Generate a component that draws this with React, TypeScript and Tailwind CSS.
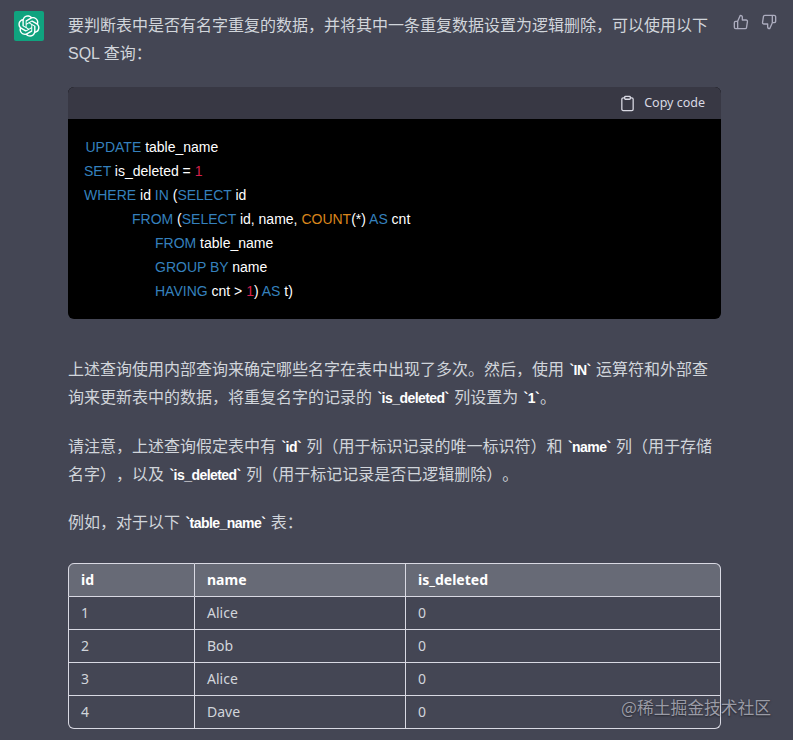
import React from "react";

const CJK = "font-['Liberation_Sans','Noto_Sans_CJK_SC',sans-serif]";

function Logo() {
  return (
    <div className="w-[30px] h-[30px] bg-[#10a37f] rounded-[2px] flex items-center justify-center shrink-0">
      <svg width="22" height="22" viewBox="0 0 41 41" fill="none">
        <path fill="#fff" d="M37.5324 16.8707C37.9808 15.5241 38.1363 14.0974 37.9886 12.6859C37.8409 11.2744 37.3934 9.91076 36.676 8.68622C35.6126 6.83404 33.9882 5.3676 32.0373 4.4985C30.0864 3.62941 27.9098 3.40259 25.8215 3.85078C24.8796 2.7893 23.7219 1.94125 22.4257 1.36341C21.1295 0.785575 19.7249 0.491269 18.3058 0.500197C16.1708 0.495044 14.0893 1.16803 12.3614 2.42214C10.6335 3.67624 9.34853 5.44666 8.6917 7.47815C7.30085 7.76286 5.98686 8.3414 4.8377 9.17505C3.68854 10.0087 2.73073 11.0782 2.02839 12.312C0.956464 14.1591 0.498905 16.2988 0.721698 18.4228C0.944492 20.5467 1.83612 22.5449 3.268 24.1293C2.81966 25.4759 2.66413 26.9026 2.81182 28.3141C2.95951 29.7256 3.40701 31.0892 4.12437 32.3138C5.18791 34.1659 6.8123 35.6322 8.76321 36.5013C10.7141 37.3704 12.8907 37.5973 14.9789 37.1492C15.9208 38.2107 17.0786 39.0587 18.3747 39.6366C19.6709 40.2144 21.0755 40.5087 22.4946 40.4998C24.6307 40.5054 26.7133 39.8321 28.4418 38.5772C30.1704 37.3223 31.4556 35.5506 32.1119 33.5179C33.5027 33.2332 34.8167 32.6547 35.9659 31.821C37.115 30.9874 38.0728 29.9178 38.7752 28.684C39.8458 26.8371 40.3023 24.6979 40.0789 22.5748C39.8556 20.4517 38.9639 18.4544 37.5324 16.8707ZM22.4978 37.8849C20.7443 37.8874 19.0459 37.2733 17.6994 36.1501C17.7601 36.117 17.8666 36.0586 17.936 36.0161L25.9004 31.4156C26.1003 31.3019 26.2663 31.137 26.3813 30.9378C26.4964 30.7386 26.5563 30.5124 26.5549 30.2825V19.0542L29.9213 20.998C29.9389 21.0068 29.9541 21.0198 29.9656 21.0359C29.977 21.052 29.9842 21.0707 29.9867 21.0902V30.3889C29.9842 32.375 29.1946 34.2791 27.7909 35.6841C26.3872 37.0892 24.4838 37.8806 22.4978 37.8849ZM6.39227 31.0064C5.51397 29.4888 5.19742 27.7107 5.49804 25.9832C5.55718 26.0187 5.66048 26.0818 5.73461 26.1244L13.699 30.7248C13.8975 30.8408 14.1233 30.902 14.3532 30.902C14.583 30.902 14.8088 30.8408 15.0073 30.7248L24.731 25.1103V28.9979C24.7321 29.0177 24.7283 29.0376 24.7199 29.0556C24.7115 29.0736 24.6988 29.0893 24.6829 29.1012L16.6317 33.7497C14.9096 34.7416 12.8643 35.0097 10.9447 34.4954C9.02506 33.9811 7.38785 32.7263 6.39227 31.0064ZM4.29707 13.6194C5.17156 12.0998 6.55279 10.9364 8.19885 10.3327C8.19885 10.4013 8.19491 10.5228 8.19491 10.6071V19.808C8.19351 20.0378 8.25334 20.2638 8.36823 20.4629C8.48312 20.6619 8.64893 20.8267 8.84863 20.9404L18.5723 26.5542L15.206 28.4979C15.1894 28.5089 15.1703 28.5155 15.1505 28.5173C15.1307 28.5191 15.1107 28.516 15.0924 28.5082L7.04046 23.8557C5.32135 22.8601 4.06716 21.2235 3.55289 19.3046C3.03862 17.3858 3.30624 15.3413 4.29707 13.6194ZM31.955 20.0556L22.2312 14.4411L25.5976 12.4981C25.6142 12.4872 25.6333 12.4805 25.6531 12.4787C25.6729 12.4769 25.6928 12.4801 25.7111 12.4879L33.7631 17.1364C34.9967 17.849 36.0017 18.8982 36.6606 20.1613C37.3194 21.4244 37.6047 22.849 37.4832 24.2684C37.3617 25.6878 36.8382 27.0432 35.9743 28.1759C35.1103 29.3086 33.9415 30.1717 32.6047 30.6641C32.6047 30.5947 32.6047 30.4733 32.6047 30.3889V21.188C32.6066 20.9586 32.5474 20.7328 32.4332 20.5338C32.319 20.3348 32.154 20.1698 31.955 20.0556ZM35.3055 15.0128C35.2464 14.9765 35.1431 14.9142 35.069 14.8717L27.1045 10.2712C26.906 10.1554 26.6803 10.0943 26.4504 10.0943C26.2206 10.0943 25.9948 10.1554 25.7963 10.2712L16.0726 15.8858V11.9982C16.0715 11.9783 16.0753 11.9585 16.0837 11.9405C16.0921 11.9225 16.1048 11.9068 16.1207 11.8949L24.1719 7.25025C25.4053 6.53903 26.8158 6.19376 28.2383 6.25482C29.6608 6.31589 31.0364 6.78077 32.2044 7.59508C33.3723 8.40939 34.2842 9.53945 34.8334 10.8531C35.3826 12.1667 35.5464 13.6095 35.3055 15.0128ZM14.2424 21.9419L10.8752 19.9981C10.8576 19.9893 10.8423 19.9763 10.8309 19.9602C10.8195 19.9441 10.8122 19.9254 10.8098 19.9058V10.6071C10.8107 9.18295 11.2173 7.78848 11.9819 6.58696C12.7466 5.38544 13.8377 4.42659 15.1275 3.82264C16.4173 3.21869 17.8524 2.99464 19.2649 3.1767C20.6775 3.35876 22.0089 3.93941 23.1034 4.85067C23.0427 4.88379 22.937 4.94215 22.8668 4.98473L14.9024 9.58517C14.7025 9.69878 14.5366 9.86356 14.4215 10.0626C14.3065 10.2616 14.2466 10.4877 14.2479 10.7175L14.2424 21.9419ZM16.071 17.9991L20.4018 15.4978L24.7325 17.9975V22.9985L20.4018 25.4983L16.071 22.9985V17.9991Z" />
      </svg>
    </div>
  );
}

function IC({ children }: { children: React.ReactNode }) {
  return <code className="mx-[1px] font-bold text-[14px] tracking-[-0.55px] text-white font-['Liberation_Sans',sans-serif]">`{children}`</code>;
}

const K = ({ children }: { children: React.ReactNode }) => <span className="text-[#3580bd]">{children}</span>;
const N = ({ children }: { children: React.ReactNode }) => <span className="text-[#d4204c]">{children}</span>;
const F = ({ children }: { children: React.ReactNode }) => <span className="text-[#d9851c]">{children}</span>;

const rows = [
  ["1", "Alice", "0"],
  ["2", "Bob", "0"],
  ["3", "Alice", "0"],
  ["4", "Dave", "0"],
];

export default function App() {
  return (
    <div className={`relative w-[793px] h-[740px] overflow-hidden bg-[#444654] text-[#d1d5db] text-[16px] leading-[28px] [text-spacing-trim:space-all] ${CJK}`}>
      <div className="flex items-start pl-[14px] pt-[11px]">
        <Logo />
        <div className="ml-[24px] w-[653px] shrink-0 pt-[1px]">
          <p className="mb-[19px]">要判断表中是否有名字重复的数据，并将其中一条重复数据设置为逻辑删除，可以使用以下 SQL 查询：</p>

          <div className="rounded-[6px] overflow-hidden bg-black mb-[37px]">
            <div className="h-[32px] bg-[#383844] flex items-center justify-end px-[16px] text-[12.5px] leading-[16px] text-[#d9d9e3]">
              <svg className="mr-[8px]" width="17" height="17" viewBox="0 0 24 24" fill="none" stroke="currentColor" strokeWidth="1.8" strokeLinecap="round" strokeLinejoin="round">
                <path d="M16 4h2a2 2 0 0 1 2 2v14a2 2 0 0 1-2 2H6a2 2 0 0 1-2-2V6a2 2 0 0 1 2-2h2" />
                <rect x="8" y="2" width="8" height="4" rx="1" ry="1" />
              </svg>
              <span className="font-['Noto_Sans',sans-serif]">Copy code</span>
            </div>
            <div className="px-[16px] pt-[16px] pb-[16px] text-[14px] leading-[24px] text-white font-['Liberation_Sans',sans-serif] whitespace-pre">
              <div className="ml-[1.5px]"><K>UPDATE</K> table_name</div>
              <div><K>SET</K> is_deleted = <N>1</N></div>
              <div><K>WHERE</K> id <K>IN</K> (<K>SELECT</K> id</div>
              <div className="ml-[48px]"><K>FROM</K> (<K>SELECT</K> id, name, <F>COUNT</F>(*) <K>AS</K> cnt</div>
              <div className="ml-[71px]"><K>FROM</K> table_name</div>
              <div className="ml-[71px]"><K>GROUP BY</K> name</div>
              <div className="ml-[71px]"><K>HAVING</K> cnt &gt; <N>1</N>) <K>AS</K> t)</div>
            </div>
          </div>

          <p className="mb-[21px]">
            上述查询使用内部查询来确定哪些名字在表中出现了多次。然后，使用 <IC>IN</IC> 运算符和外部查询来更新表中的数据，将重复名字的记录的 <IC>is_deleted</IC> 列设置为 <IC>1</IC>。
          </p>
          <p className="mb-[20px]">
            请注意，上述查询假定表中有 <IC>id</IC> 列（用于标识记录的唯一标识符）和 <IC>name</IC> 列（用于存储名字），以及 <IC>is_deleted</IC> 列（用于标记记录是否已逻辑删除）。
          </p>
          <p className="mb-[26px]">
            例如，对于以下 <IC>table_name</IC> 表：
          </p>

          <table className="w-[653px] table-fixed border-separate border-spacing-0 text-[14px] leading-[20px] font-['Noto_Sans','Noto_Sans_CJK_SC',sans-serif]">
            <colgroup>
              <col className="w-[127px]" />
              <col className="w-[211px]" />
              <col className="w-[315px]" />
            </colgroup>
            <thead>
              <tr className="bg-[#676a76] text-white text-left">
                <th className="h-[34px] px-[12px] py-0 font-bold border border-[#d9d9e3] rounded-tl-[6px]">id</th>
                <th className="h-[34px] px-[12px] py-0 font-bold border-y border-r border-[#d9d9e3]">name</th>
                <th className="h-[34px] px-[12px] py-0 font-bold border-y border-r border-[#d9d9e3] rounded-tr-[6px]">is_deleted</th>
              </tr>
            </thead>
            <tbody>
              {rows.map((r, i) => (
                <tr key={i}>
                  <td className={`h-[33px] px-[12px] py-0 border-l border-b border-r border-[#d9d9e3] ${i === 3 ? "rounded-bl-[6px]" : ""}`}>{r[0]}</td>
                  <td className="h-[33px] px-[12px] py-0 border-b border-r border-[#d9d9e3]">{r[1]}</td>
                  <td className={`h-[33px] px-[12px] py-0 border-b border-r border-[#d9d9e3] ${i === 3 ? "rounded-br-[6px]" : ""}`}>{r[2]}</td>
                </tr>
              ))}
            </tbody>
          </table>
        </div>
        <div className="ml-[12px] mt-[3px] flex gap-[12px] text-[#acacbe]">
          <svg width="16" height="16" viewBox="0 0 24 24" fill="none" stroke="currentColor" strokeWidth="2" strokeLinecap="round" strokeLinejoin="round">
            <path d="M14 9V5a3 3 0 0 0-3-3l-4 9v11h11.28a2 2 0 0 0 2-1.7l1.38-9a2 2 0 0 0-2-2.3zM7 22H4a2 2 0 0 1-2-2v-7a2 2 0 0 1 2-2h3" />
          </svg>
          <svg width="16" height="16" viewBox="0 0 24 24" fill="none" stroke="currentColor" strokeWidth="2" strokeLinecap="round" strokeLinejoin="round">
            <path d="M10 15v4a3 3 0 0 0 3 3l4-9V2H5.72a2 2 0 0 0-2 1.7l-1.38 9a2 2 0 0 0 2 2.3zm7-13h2.67A2.31 2.31 0 0 1 22 4v7a2.31 2.31 0 0 1-2.33 2H17" />
          </svg>
        </div>
      </div>
      <div className="absolute left-[621px] top-[695px] text-[16.8px] leading-[24px] text-[#9a9ba6] font-['Noto_Sans_CJK_SC',sans-serif] [text-shadow:0_1px_2px_rgba(0,0,0,0.5)]">@稀土掘金技术社区</div>
    </div>
  );
}
